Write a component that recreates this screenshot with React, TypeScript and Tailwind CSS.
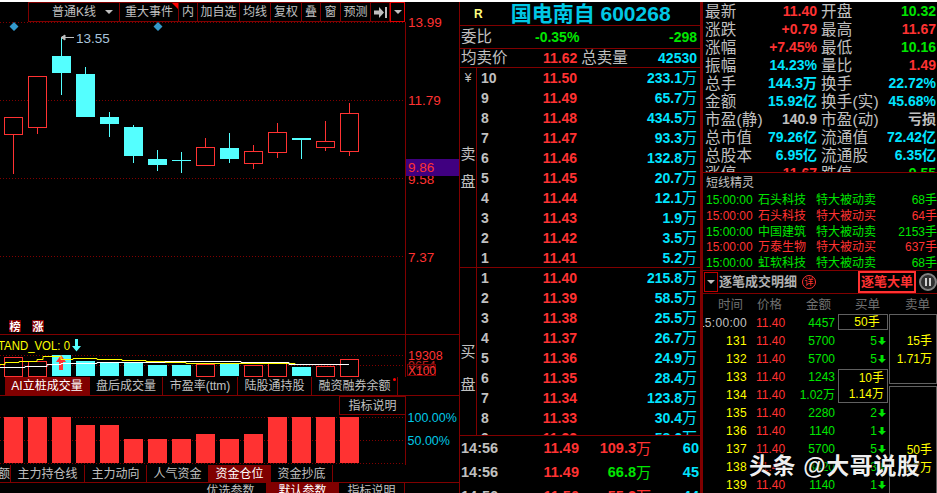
import React from "react";

const RED = "#ff3232";
const CY = "#54ffff";
const DR = "#800000";

type C = { x: number; t: number; b: number; hi: number; lo: number; up: boolean };
const candles: C[] = [
  { x: 13, t: 117, b: 134, hi: 117, lo: 174, up: true },
  { x: 37, t: 76, b: 127, hi: 76, lo: 134, up: true },
  { x: 61, t: 56, b: 73, hi: 37, lo: 95, up: false },
  { x: 85, t: 74, b: 117, hi: 67, lo: 117, up: false },
  { x: 109, t: 117, b: 124, hi: 112, lo: 137, up: false },
  { x: 133, t: 127, b: 156, hi: 125, lo: 163, up: false },
  { x: 157, t: 159, b: 165, hi: 150, lo: 171, up: false },
  { x: 181, t: 160, b: 161, hi: 152, lo: 173, up: false },
  { x: 205, t: 147, b: 165, hi: 138, lo: 166, up: true },
  { x: 229, t: 148, b: 159, hi: 133, lo: 163, up: false },
  { x: 253, t: 151, b: 163, hi: 145, lo: 169, up: true },
  { x: 277, t: 132, b: 152, hi: 123, lo: 158, up: true },
  { x: 301, t: 138, b: 140, hi: 138, lo: 159, up: false },
  { x: 325, t: 141, b: 147, hi: 121, lo: 151, up: true },
  { x: 349, t: 113, b: 151, hi: 103, lo: 156, up: true },
];

const volTops: [number, boolean][] = [
  [357, true], [361, true], [355, false], [361, false], [363, false], [363, false], [365, false], [365, false],
  [364, true], [363, false], [365, true], [363, true], [367, false], [366, true], [359, true],
];
const fundTops = [417, 417, 417, 425, 425, 439, 439, 439, 434, 439, 434, 417, 417, 417, 417];

function Main() {
  return (
    <svg width={459} height={312} viewBox="0 22 459 312" className="block shrink-0 overflow-visible">
      {[22, 100, 178, 256].map((y) => (
        <line key={y} x1={0} x2={405} y1={y + 0.5} y2={y + 0.5} stroke={DR} strokeDasharray="1 2" />
      ))}
      <line x1={405.5} x2={405.5} y1={22} y2={334} stroke={DR} />
      <path d="M14 22l4.5 4.5L14 31l-4.500-4.500zM158 22l4.500 4.500L158 31l-4.500-4.500z" fill="#3399cc" />
      {candles.map((c) => (
        <g key={c.x}>
          <line x1={c.x + 0.5} x2={c.x + 0.5} y1={c.hi} y2={c.lo} stroke={c.up ? RED : CY} />
          {c.up ? (
            <rect x={c.x - 8.500} y={c.t + 0.500} width={18} height={c.b - c.t} fill="#000" stroke={RED} />
          ) : (
            <rect x={c.x - 9} y={c.t} width={19} height={c.b - c.t} fill={CY} />
          )}
        </g>
      ))}
      <path d="M61.500 37.500H74M61 37.500l4-2.500v5z" stroke="#c0c0c0" fill="#c0c0c0" />
      <text x={76} y={42.500} fontSize={13.500} fill="#a9c4dc">13.55</text>
      {[["13.99", 27], ["11.79", 105], ["9.58", 184], ["7.37", 262]].map(([t, y]) => (
        <text key={t} x={408} y={y} fontSize={13.500} fill={RED}>{t}</text>
      ))}
      <rect x={406} y={159} width={53} height={17} fill="#400080" />
      <text x={408} y={172} fontSize={13.500} fill={RED}>9.86</text>
      <rect x={9} y={320} width={12} height={12} fill={DR} />
      <rect x={32} y={320} width={12} height={12} fill={DR} />
      <text x={9.500} y={330.500} fontSize={11} fontWeight={700} fill="#fff">榜</text>
      <text x={32.500} y={330.500} fontSize={11} fontWeight={700} fill="#fff">涨</text>
    </svg>
  );
}

function Vol() {
  return (
    <svg width={459} height={43} viewBox="0 334 459 43" className="block shrink-0">
      <line x1={0} x2={459} y1={334.500} y2={334.500} stroke={DR} />
      <line x1={0} x2={405} y1={355.500} y2={355.500} stroke={DR} strokeDasharray="1 2" />
      <line x1={0} x2={405} y1={365.500} y2={365.500} stroke={DR} strokeDasharray="1 2" />
      <line x1={405.500} x2={405.500} y1={334} y2={377} stroke={DR} />
      <text x={-2} y={349.500} fontSize={12} textLength={72} lengthAdjust="spacingAndGlyphs" fill="#ffff00">TAND_VOL: 0</text>
      <path d="M75 339h3v7h3l-4.500 5.500L72 346h3z" fill={CY} />
      {volTops.map(([t, up], i) => {
        const x = 4 + i * 24;
        return up ? (
          <rect key={i} x={x + 0.500} y={t + 0.500} width={18} height={376 - t} fill="#000" stroke={RED} />
        ) : (
          <rect key={i} x={x} y={t} width={19} height={376 - t} fill={CY} />
        );
      })}
      <path d="M61 355l5 7h-3v8h-4v-8h-3z" fill={RED} />
      <path d="M0 364.500H5V362.500H19V361.500H37V359.500H43V356.500H61V359.500H73V358.500H97V359.500H122V360.500H146V361.500H165V362.500H186V363.500H295V364.500H337" fill="none" stroke="#ffff00" />
      <path d="M0 367.500H25V366.500H47V364.500H61V363.500H97V362.500H165V361.500H241V362.500H289V364.500H349" fill="none" stroke="#ffffff" />
      <text x={408} y={360} fontSize={12.500} fill={RED}>19308</text>
      <text x={408} y={370} fontSize={12.500} fill={RED} opacity={0.7}>9654</text>
      <rect x={407.500} y={364.500} width={28} height={11} fill="#000" fillOpacity={0.4} stroke={DR} />
      <text x={408} y={374.500} fontSize={12} fill={RED}>X100</text>
    </svg>
  );
}

function Fund() {
  return (
    <div className="relative h-[69px] shrink-0">
      <svg width={459} height={69} viewBox="0 396 459 69" className="block">
        {[417, 440, 463].map((y) => (
          <line key={y} x1={0} x2={405} y1={y + 0.500} y2={y + 0.500} stroke={DR} strokeDasharray="1 2" />
        ))}
        <line x1={405.500} x2={405.500} y1={396} y2={465} stroke={DR} />
        {fundTops.map((t, i) => (
          <rect key={i} x={4 + i * 24} y={t} width={19} height={463 - t} fill={RED} />
        ))}
        <text x={407.500} y={422} fontSize={12.500} fill="#00c8e6">100.00%</text>
        <text x={407.500} y={445} fontSize={12.500} fill="#00c8e6">50.00%</text>
      </svg>
      <div className="absolute left-[339px] top-0 flex h-[19px] w-[67px] items-center justify-center border border-[#800000] bg-black text-[12px] text-[#c0c0c0]">指标说明</div>
    </div>
  );
}

function Tab({ w, active, children }: { w: number; active?: boolean; children: React.ReactNode }) {
  return (
    <div
      style={{ width: w }}
      className={
        "flex shrink-0 items-center justify-center whitespace-nowrap border-r border-[#800000] text-[12px] " +
        (active ? "bg-[#800000] text-white" : "text-[#c0c0c0]")
      }
    >
      {children}
    </div>
  );
}

function Left() {
  const tools: [string, number][] = [
    ["重大事件", 59], ["内", 19], ["加自选", 42], ["均线", 31], ["复权", 31], ["叠", 19], ["窗", 20], ["预测", 30],
  ];
  return (
    <div className="flex h-full w-[459px] shrink-0 flex-col overflow-hidden">
      <div className="flex h-[20px] shrink-0 pl-[28px]">
        <div className="flex w-[92px] items-center justify-between border border-[#800000] pl-[23px] pr-[6px] text-[12px] text-[#c0c0c0]">
          <span>普通K线</span>
          <span className="h-0 w-0 border-x-[4px] border-t-[4px] border-x-transparent border-t-[#c0c0c0]" />
        </div>
        {tools.map(([t, w]) => (
          <div key={t} style={{ width: w }} className="relative flex items-center justify-center whitespace-nowrap border-y border-r border-[#800000] text-[12px] text-[#c0c0c0]">
            {t}
            {t === "重大事件" && <span className="absolute right-0 top-0 h-0 w-0 border-l-[6px] border-t-[6px] border-l-transparent border-t-[#ff0000]" />}
          </div>
        ))}
        <div className="flex w-[19px] items-center justify-center border-y border-r border-[#800000]">
          <svg width={13} height={11} viewBox="0 0 13 11"><path d="M0 3.500h5V0l5 5.500L5 11V7.500H0zM11 0h2v11h-2z" fill="#c0c0c0" /></svg>
        </div>
        <div className="flex w-[15px] items-center justify-center border border-[#e00000]">
          <span className="h-0 w-0 border-x-[4px] border-t-[4px] border-x-transparent border-t-[#c0c0c0]" />
        </div>
      </div>
      <Main />
      <Vol />
      <div className="flex h-[19px] shrink-0 border-b border-[#800000] pl-[5px]">
        <Tab w={85} active>AI立桩成交量</Tab>
        <Tab w={73}>盘后成交量</Tab>
        <Tab w={75}>市盈率(ttm)</Tab>
        <Tab w={74}>陆股通持股</Tab>
        <Tab w={86}>
          <span className="relative">融资融券余额<span className="absolute -right-[5px] top-[1px] h-[3px] w-[3px] rounded-full bg-[#ff0000]" /></span>
        </Tab>
      </div>
      <Fund />
      <div className="flex h-[18px] shrink-0 border-b border-[#800000]">
        <Tab w={11}><span className="w-[11px] overflow-hidden text-right" dir="rtl">额</span></Tab>
        <Tab w={74}>主力持仓线</Tab>
        <Tab w={62}>主力动向</Tab>
        <Tab w={62}>人气资金</Tab>
        <Tab w={62} active>资金仓位</Tab>
        <Tab w={62}>资金抄底</Tab>
      </div>
      <div className="relative flex h-[12px] shrink-0 overflow-hidden pl-[195px]">
        <Tab w={72}><span className="pt-[3px]">优选参数</span></Tab>
        <Tab w={72} active><span className="pt-[3px]">默认参数</span></Tab>
        <Tab w={66}><span className="pt-[3px]">指标说明</span></Tab>
      </div>
    </div>
  );
}

function Vol2({ v, color = "#00e4ff" }: { v: string; color?: string }) {
  return (
    <span className="flex items-center font-bold" style={{ color }}>
      {v}
      <span className="text-[15px] font-normal">万</span>
    </span>
  );
}

function Book({ rows, side, h }: { rows: [string, string, string][]; side: React.ReactNode; h: string }) {
  return (
    <div className={"flex shrink-0 overflow-hidden " + h}>
      <div className="relative flex w-[17px] shrink-0 flex-col items-center border-r border-[#800000] text-[15px] text-[#c0c0c0]">{side}</div>
      <div className="flex-1">
        {rows.map(([n, p, v]) => (
          <div key={n + p} className="flex h-5 items-center text-[14px]">
            <span className="w-[20px] pl-[4px] font-bold text-[#c0c0c0]">{n}</span>
            <span className="ml-[35px] w-[45px] text-right font-bold" style={{ color: RED }}>{p}</span>
            <span className="ml-auto pr-[3px]"><Vol2 v={v} /></span>
          </div>
        ))}
      </div>
    </div>
  );
}

const sells: [string, string, string][] = [
  ["10", "11.50", "233.1"], ["9", "11.49", "65.7"], ["8", "11.48", "434.5"], ["7", "11.47", "93.3"], ["6", "11.46", "132.8"],
  ["5", "11.45", "20.7"], ["4", "11.44", "12.1"], ["3", "11.43", "1.9"], ["2", "11.42", "3.5"], ["1", "11.41", "5.2"],
];
const buys: [string, string, string][] = [
  ["1", "11.40", "215.8"], ["2", "11.39", "58.5"], ["3", "11.38", "25.5"], ["4", "11.37", "26.7"], ["5", "11.36", "24.9"],
  ["6", "11.35", "28.4"], ["7", "11.34", "123.8"], ["8", "11.33", "30.4"], ["9", "11.32", "58.6"],
];

function Middle() {
  return (
    <div className="flex h-full w-[242px] shrink-0 flex-col overflow-hidden border-x border-[#800000]">
      <div className="flex h-[24px] shrink-0 items-center border-b border-[#800000]">
        <span className="ml-[14px] text-[12px] font-bold text-[#ffff80]">R</span>
        <span className="ml-[28px] whitespace-nowrap text-[21px] font-bold leading-none text-[#00c8e6]">国电南自 600268</span>
      </div>
      <div className="flex h-[23px] shrink-0 items-center border-b border-[#800000] pl-[1px] pr-[3px] text-[14px] font-bold text-[#00e600]">
        <span className="w-[74px] text-[15.500px] font-normal text-[#c0c0c0]">委比</span>
        <span>-0.35%</span>
        <span className="ml-auto">-298</span>
      </div>
      <div className="flex h-[19px] shrink-0 items-center border-b border-[#800000] pl-[1px] pr-[3px] text-[14px] font-bold">
        <span className="w-[82px] text-[15.500px] font-normal text-[#c0c0c0]">均卖价</span>
        <span style={{ color: RED }}>11.62</span>
        <span className="ml-[4px] text-[15.500px] font-normal text-[#c0c0c0]">总卖量</span>
        <span className="ml-auto text-[#00e4ff]">42530</span>
      </div>
      <div className="border-b border-[#800000]">
        <Book
          h="h-[199px]"
          rows={sells}
          side={
            <>
              <span className="mt-[1px] text-[12px]">¥</span>
              <span className="mt-[59px] leading-none">卖</span>
              <span className="mt-[13px] leading-none">盘</span>
            </>
          }
        />
      </div>
      <div className="border-b border-[#800000]">
        <Book
          h="h-[167px]"
          rows={buys}
          side={
            <>
              <span className="mt-[76px] leading-none">买</span>
              <span className="mt-[18px] leading-none">盘</span>
            </>
          }
        />
      </div>
      {[
        ["11.49", "109.3", RED, "60"],
        ["11.49", "66.8", "#00e600", "45"],
        ["11.50", "55.2", RED, "44"],
      ].map(([p, v, c, n], i) => (
        <div key={i} className="flex h-6 shrink-0 items-center pr-[1px] pt-[2px] text-[14.500px] font-bold">
          <span className="w-[48px] pl-[1px] text-[#c0c0c0]">14:56</span>
          <span className="ml-[29px] w-[42px] text-right" style={{ color: RED }}>{p}</span>
          <span className="ml-auto"><Vol2 v={v} color={c} /></span>
          <span className="w-[48px] text-right text-[#00e4ff]">{n}</span>
        </div>
      ))}
    </div>
  );
}

function Stat({ l, v, c }: { l: string; v: string; c: string }) {
  return (
    <div className="flex items-center justify-between whitespace-nowrap">
      <span className="text-[15.500px] font-normal tracking-[0.200px] text-[#c0c0c0]">{l}</span>
      <span className="flex items-center font-bold" style={{ color: c }}>{v}</span>
    </div>
  );
}

const BL = "#00e4ff";
const GR = "#00e600";
const GY = "#c0c0c0";
const stats: [string, string, string, string, string, string][] = [
  ["最新", "11.40", RED, "开盘", "10.32", GR],
  ["涨跌", "+0.79", RED, "最高", "11.67", RED],
  ["涨幅", "+7.45%", RED, "最低", "10.16", GR],
  ["振幅", "14.23%", BL, "量比", "1.49", RED],
  ["总手", "144.3万", BL, "换手", "22.72%", BL],
  ["金额", "15.92亿", BL, "换手(实)", "45.68%", BL],
  ["市盈(静)", "140.9", GY, "市盈(动)", "亏损", GY],
  ["总市值", "79.26亿", BL, "流通值", "72.42亿", BL],
  ["总股本", "6.95亿", BL, "流通股", "6.35亿", BL],
  ["涨停", "11.67", RED, "跌停", "9.55", GR],
];

const sprites: [string, string, string, boolean][] = [
  ["石头科技", "特大被动卖", "68手", true],
  ["石头科技", "特大被动买", "64手", false],
  ["中国建筑", "特大被动卖", "2153手", true],
  ["万泰生物", "特大被动买", "637手", false],
  ["虹软科技", "特大被动卖", "68手", true],
];

const Down = () => (
  <svg width={8} height={8} viewBox="0 0 8 8" className="ml-[1px]"><path d="M2.500 0h3v4H8L4 8 0 4h2.500z" fill="#00e600" /></svg>
);

const ticks: [string, string][] = [
  ["15:00:00", "4457"], ["131", "5700"], ["132", "5700"], ["133", "1243"], ["134", "1.02万"],
  ["135", "2280"], ["136", "1140"], ["137", "5700"], ["138", "3420"], ["139", "1140"],
];

function BuyCell({ v }: { v: string }) {
  return (
    <div className="flex h-[18px] items-center justify-end pr-[2px] text-[#00e600]">
      {v}
      <Down />
    </div>
  );
}

function Right() {
  return (
    <div className="flex h-full flex-1 flex-col overflow-hidden border-l-2 border-[#800000]">
      <div className="h-[171px] shrink-0 overflow-hidden border-b border-[#800000]">
        <div className="-mt-[2px]">
          {stats.map(([a, b, c, d, e, f]) => (
            <div key={a} className="grid h-[18px] grid-cols-[115px_1fr] items-center text-[14px]">
              <div className="pl-[2px] pr-[1px]"><Stat l={a} v={b} c={c} /></div>
              <div className="pl-[3px] pr-[1px]"><Stat l={d} v={e} c={f} /></div>
            </div>
          ))}
        </div>
      </div>
      <div className="h-[98px] shrink-0 overflow-hidden border-b border-[#800000]">
        <div className="flex h-[19px] items-center pl-[3px] text-[12px] text-[#c0c0c0]">短线精灵</div>
        {sprites.map(([n, t, v, g], i) => (
          <div key={i} className="flex h-[15.800px] items-center whitespace-nowrap text-[12px]" style={{ color: g ? "#00e600" : RED }}>
            <span className="ml-[3px] w-[52px]">15:00:00</span>
            <span className="w-[58px]">{n}</span>
            <span>{t}</span>
            <span className="ml-auto">{v}</span>
          </div>
        ))}
      </div>
      <div className="flex h-[23px] shrink-0 items-center border-b border-[#800000]">
        <div className="ml-[1px] flex h-[20px] w-[14px] items-center justify-center border border-[#c00000]">
          <span className="h-0 w-0 border-x-[4px] border-t-[4px] border-x-transparent border-t-[#c0c0c0]" />
        </div>
        <span className="ml-[1px] w-[83px] whitespace-nowrap text-[13px] font-bold text-[#b0b0b0]">逐笔成交明细</span>
        <span className="flex h-[14px] w-[14px] items-center justify-center rounded-full border border-[#ff3232] text-[9px] leading-none text-[#ff3232]">详</span>
        <span className="ml-[42px] flex h-[22px] w-[58px] items-center justify-center whitespace-nowrap border-2 border-[#ff3232] text-[13px] font-bold text-[#ff3232]">逐笔大单</span>
        <span className="ml-[3px] flex h-[18px] w-[18px] items-center justify-center gap-[2px] rounded-full border-2 border-[#808080] bg-[#303030]">
          <span className="h-[8px] w-[2px] bg-[#d0d0d0]" />
          <span className="h-[8px] w-[2px] bg-[#d0d0d0]" />
        </span>
      </div>
      <div className="flex h-[19px] shrink-0 items-center pt-[3px] text-[12.500px] text-[#707070]">
        <span className="ml-[15px] w-[39px]">时间</span>
        <span className="w-[49px]">价格</span>
        <span className="w-[49px]">金额</span>
        <span className="w-[50px]">买单</span>
        <span>卖单</span>
      </div>
      <div className="relative flex flex-1 overflow-hidden pt-[1px] text-[12px]">
        <div className="w-[134px] shrink-0">
          {ticks.map(([t, a]) => (
            <div key={t} className="flex h-[18px] items-center">
              <div className="flex w-[44px] justify-end overflow-hidden whitespace-nowrap tracking-[0.300px] text-[#ffff00]">
                <span style={{ color: t.includes(":") ? GY : undefined }}>{t}</span>
              </div>
              <span className="ml-[9px] w-[32px]" style={{ color: RED }}>11.40</span>
              <span className="w-[47px] text-right text-[#00e600]">{a}</span>
            </div>
          ))}
        </div>
        <div className="w-[51px] shrink-0 text-[#ffff00]">
          <div className="ml-[1px] flex h-[16px] items-center justify-center border border-[#606060] pl-[8px]">50手</div>
          <div className="h-[2px]" />
          <BuyCell v="5" />
          <BuyCell v="5" />
          <div className="ml-[1px] mt-[1px] h-[34px] border border-[#606060] text-right">
            <div className="flex h-[16px] items-center justify-end pr-[3px]">10手</div>
            <div className="flex h-[16px] items-center justify-end pr-[3px]">1.14万</div>
          </div>
          <div className="h-[1px]" />
          <BuyCell v="2" />
          <BuyCell v="1" />
          <BuyCell v="5" />
          <BuyCell v="3" />
          <BuyCell v="1" />
        </div>
        <div className="flex-1 pl-[1px] text-[#ffff00]">
          <div className="h-[70px] border border-[#606060] pr-[4px] text-right">
            <div className="h-[17px]" />
            <div className="flex h-[18px] items-center justify-end">15手</div>
            <div className="flex h-[18px] items-center justify-end">1.71万</div>
          </div>
          <div className="mt-[2px] h-[120px] border border-[#606060] pr-[4px] text-right">
            <div className="h-[54px]" />
            <div className="flex h-[18px] items-center justify-end">50手</div>
            <div className="flex h-[18px] items-center justify-end">5.7万</div>
          </div>
        </div>
      </div>
    </div>
  );
}

export default function App() {
  return (
    <div className='relative flex h-[493px] w-[937px] overflow-hidden border-t-2 border-white bg-black font-["Liberation_Sans","Noto_Sans_CJK_SC",sans-serif]'>
      <Left />
      <Middle />
      <Right />
      <div className="absolute left-[749px] top-[453px] whitespace-nowrap text-[23px] font-bold leading-none tracking-[0.600px] text-white/95 [text-shadow:0_0_3px_#000,1px_1px_2px_#000]">
        头条 @大哥说股
      </div>
    </div>
  );
}
